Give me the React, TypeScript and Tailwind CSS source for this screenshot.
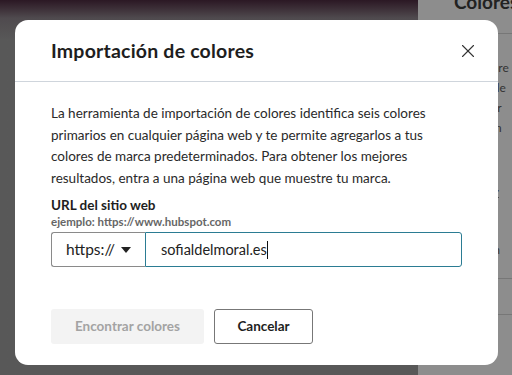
import { X } from 'lucide-react';

const font = { fontFamily: 'Lato, "Noto Sans", sans-serif' };

function Backdrop() {
    return (
        <div className="flex h-full w-full">
            <div className="flex-1 bg-gradient-to-b from-[#2b1824] via-[#4f4a4e] via-[18px] to-[#585858] to-[40px]" />
            <div className="w-[94px] bg-[#8d8d8d] text-[#222] overflow-hidden" style={font}>
                <div className="-mt-[12px] pl-[36px] text-[19px] font-bold whitespace-nowrap">Colores</div>
                <div className="mt-[16px] h-px bg-[#777]" />
                <div className="pl-[34px] pt-[24px] text-[12px] leading-[20px] whitespace-nowrap text-[#333]">
                    <p>ajustes pre</p>
                    <p>colores de</p>
                    <p>y mostrar</p>
                    <p>de la cam</p>
                    <p className="font-bold underline">Colores</p>
                    <p className="mt-[24px] font-bold underline">Importar</p>
                    <p className="mt-[22px] font-bold">Primario</p>
                    <p className="-mt-[4px] text-[11px]">Color prin</p>
                </div>
                <div className="mt-[18px] h-px bg-[#777]" />
                <div className="mt-[35px] h-px bg-[#777]" />
                <div className="pl-[30px] pt-[22px] text-[12px] leading-[14px] whitespace-nowrap">
                    <p className="font-bold">Secunda</p>
                    <p className="text-[11px]">Usado</p>
                </div>
            </div>
        </div>
    );
}

export default function App() {
    return (
        <div className="relative w-[512px] h-[375px] overflow-hidden" style={font}>
            <Backdrop />
            <div className="absolute left-[15px] top-[20px] w-[483px] h-[345px] bg-white rounded-[13px] text-[#1e1e1e]">
                <div className="flex items-center justify-between h-[61px] pl-[36px] pr-[19px]">
                    <h1 className="text-[19.5px] font-bold tracking-[0.2px]">Importación de colores</h1>
                    <X className="w-[22px] h-[22px] text-[#333]" strokeWidth={1.2} />
                </div>
                <div className="h-px bg-[#cfd5dc]" />
                <div className="px-[36px] pt-[21px]">
                    <p className="text-[13.5px] leading-[21.5px] text-[#2a2a2a] pr-[20px]">
                        La herramienta de importación de colores identifica seis colores primarios en cualquier página web y te permite agregarlos a tus colores de marca predeterminados. Para obtener los mejores resultados, entra a una página web que muestre tu marca.
                    </p>
                    <div className="mt-[7px] text-[13.5px] font-bold leading-[18px]">URL del sitio web</div>
                    <div className="mt-[1px] text-[11.5px] font-bold leading-[14px] text-[#666]">ejemplo: https://www.hubspot.com</div>
                    <div className="mt-[3px] flex h-[35px] w-[411px]">
                        <button className="flex items-center gap-[6px] w-[94px] border border-[#8a8a8a] border-r-0 rounded-l-[3px] pl-[14px] text-[15.5px] text-[#222]">
                            https://
                            <svg width="10" height="6" viewBox="0 0 10 6" className="mt-[1px]">
                                <path d="M0 0 L10 0 L5 6 Z" fill="#222" />
                            </svg>
                        </button>
                        <div className="flex-1 flex items-center border border-[#2b7c93] rounded-r-[3px] pl-[15px] text-[14.5px] text-[#222]">
                            sofialdelmoral.es<span className="w-px h-[18px] bg-[#111]" />
                        </div>
                    </div>
                    <div className="mt-[42px] flex gap-[10px]">
                        <button className="h-[35px] w-[153px] rounded-[3px] bg-[#f3f3f3] text-[13.5px] font-bold text-[#a3a3a3]">Encontrar colores</button>
                        <button className="h-[35px] w-[99px] rounded-[3px] border border-[#777] text-[13.5px] font-bold text-[#1e1e1e]">Cancelar</button>
                    </div>
                </div>
            </div>
        </div>
    );
}
